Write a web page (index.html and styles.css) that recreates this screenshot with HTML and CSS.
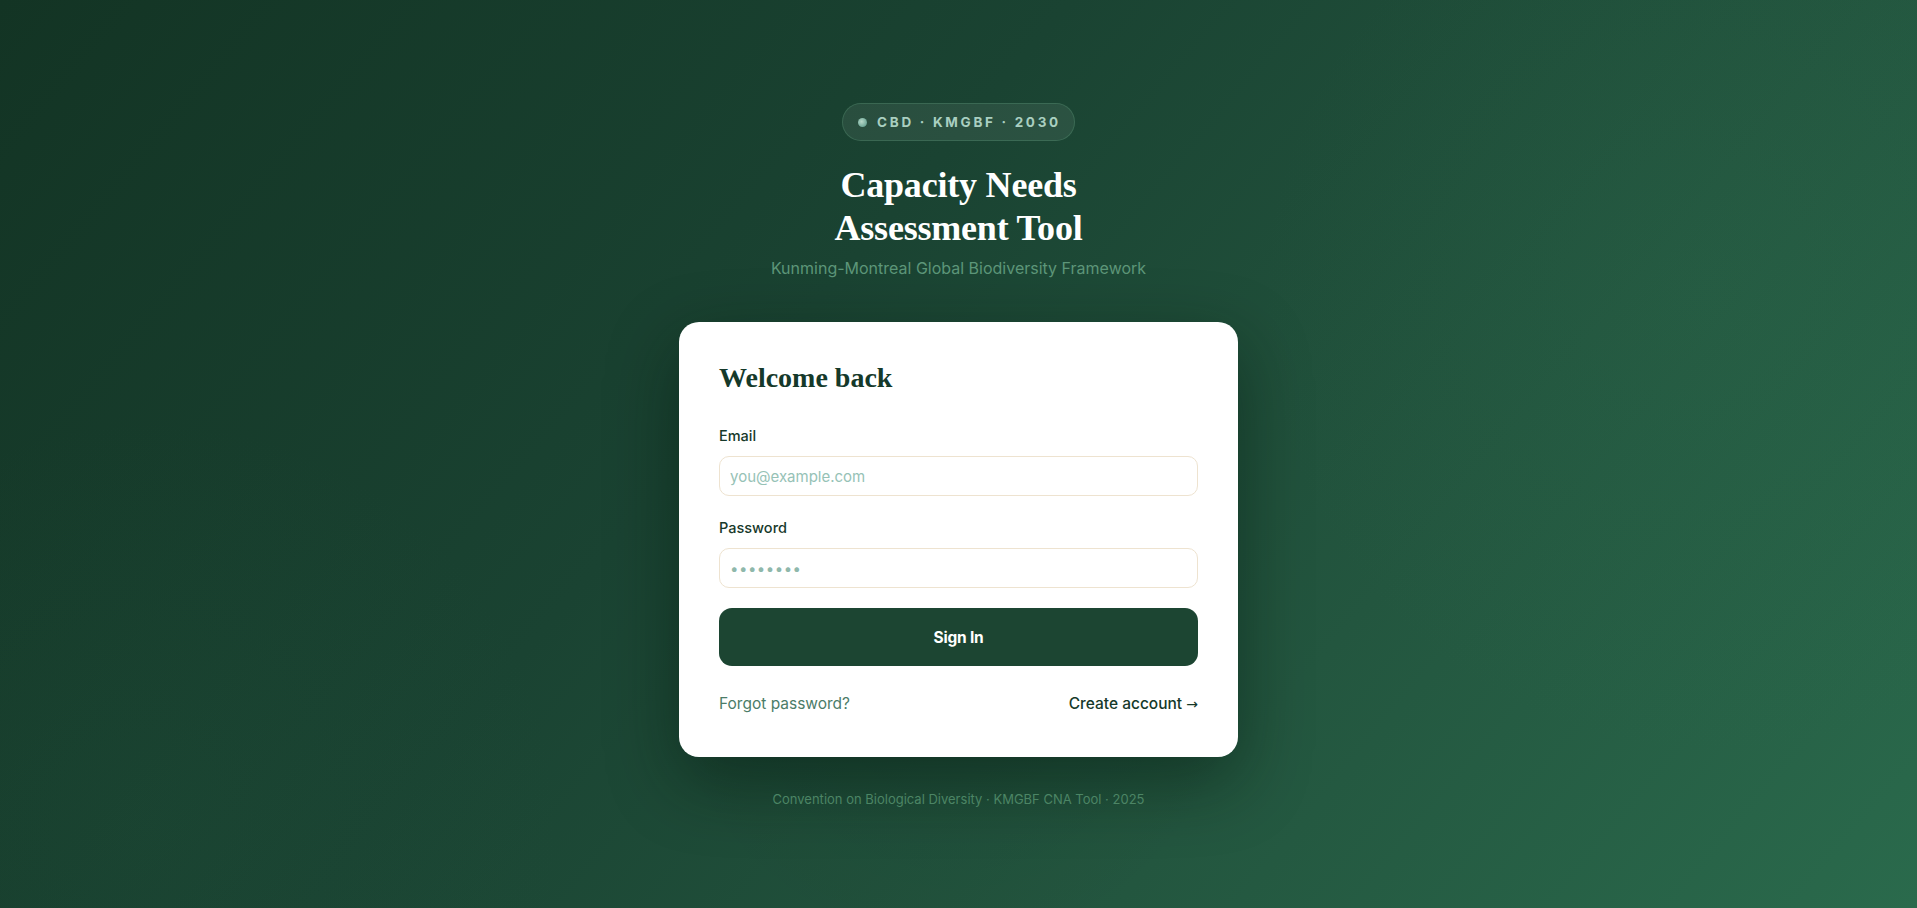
FILE: index.html
```html
<!DOCTYPE html>
<html lang="en">
<head>
<meta charset="utf-8">
<title>Capacity Needs Assessment Tool</title>
<link rel="stylesheet" href="styles.css">
</head>
<body>
<div class="bg-shapes">
  <span class="blob blob-a"></span>
  <span class="blob blob-b"></span>
  <span class="blob blob-c"></span>
</div>
<main class="page">
  <div class="badge"><span class="badge-dot"></span><span class="badge-text">CBD · KMGBF · 2030</span></div>
  <h1 class="title">Capacity Needs<br>Assessment Tool</h1>
  <p class="subtitle">Kunming-Montreal Global Biodiversity Framework</p>

  <section class="card">
    <h2 class="card-title">Welcome back</h2>
    <form class="form">
      <label class="field">
        <span class="field-label">Email</span>
        <input class="input" type="email" placeholder="you@example.com">
      </label>
      <label class="field">
        <span class="field-label">Password</span>
        <input class="input input-pass" type="password" placeholder="••••••••">
      </label>
      <button class="btn" type="button">Sign In</button>
    </form>
    <div class="links">
      <a class="link-muted" href="#">Forgot password?</a>
      <a class="link-strong" href="#">Create account <span class="arrow">→</span></a>
    </div>
  </section>

  <p class="footer">Convention on Biological Diversity · KMGBF CNA Tool · 2025</p>
</main>
</body>
</html>
```
FILE: styles.css
```css
* { box-sizing: border-box; }
html, body { height: 100%; }
body {
  margin: 0;
  min-height: 100vh;
  overflow: hidden;
  font-family: "Inter", "Noto Sans", "Liberation Sans", sans-serif;
  background: linear-gradient(130deg, #133424 0%, #1a4332 40%, #23563f 70%, #2a6a4c 100%);
  position: relative;
}
.bg-shapes { position: absolute; inset: 0; pointer-events: none; overflow: hidden; }
.blob { position: absolute; border-radius: 50%; }
.blob-a { width: 900px; height: 900px; left: -300px; top: 380px; background: radial-gradient(circle, rgba(40,100,70,0.10), rgba(0,0,0,0) 65%); }
.blob-b { width: 1000px; height: 1000px; right: -300px; top: -200px; background: radial-gradient(circle, rgba(50,120,85,0.12), rgba(0,0,0,0) 65%); }
.blob-c { width: 700px; height: 700px; left: 600px; top: 300px; background: radial-gradient(circle, rgba(0,0,0,0.06), rgba(0,0,0,0) 65%); }

.page {
  position: relative;
  display: flex;
  flex-direction: column;
  align-items: center;
  padding-top: 103px;
}
.badge {
  display: flex;
  align-items: center;
  gap: 10px;
  height: 38px;
  padding: 0 15px 0 15px;
  border-radius: 19px;
  background: rgba(255,255,255,0.07);
  border: 1px solid rgba(120,190,150,0.22);
}
.badge-dot {
  width: 9px; height: 9px; border-radius: 50%;
  background: radial-gradient(circle at 40% 40%, #b8d8c8, #6fa898 70%);
}
.badge-text {
  color: #a9cfc0;
  font-size: 13.5px;
  font-weight: 700;
  letter-spacing: 0.2em;
  margin-right: -2px;
}
.title {
  margin: 23px 0 0;
  font-family: "Liberation Serif", "DejaVu Serif", serif;
  font-weight: 700;
  font-size: 36px;
  line-height: 43px;
  color: #ffffff;
  text-align: center;
  letter-spacing: -0.2px;
}
.subtitle {
  margin: 7px 0 0;
  font-size: 16px;
  line-height: 22px;
  color: #5d9679;
}
.card {
  margin-top: 43px;
  width: 559px;
  background: #ffffff;
  border-radius: 20px;
  padding: 38px 40px 42px;
  box-shadow: 0 24px 70px rgba(0,20,10,0.45);
}
.card-title {
  margin: 0;
  font-family: "Liberation Serif", "DejaVu Serif", serif;
  font-weight: 700;
  font-size: 28px;
  line-height: 36px;
  color: #15392a;
}
.form { display: flex; flex-direction: column; margin-top: 30px; }
.field { display: flex; flex-direction: column; margin-bottom: 21px; }
.field + .field { margin-bottom: 20px; }
.field-label {
  font-size: 14.5px;
  font-weight: 500;
  line-height: 20px;
  color: #17392b;
  margin-bottom: 10px;
}
.field + .field .field-label { margin-top: 1px; }
.input {
  height: 40px;
  width: 100%;
  border: 1px solid #eee3d0;
  border-radius: 10px;
  padding: 0 10px;
  font-family: inherit;
  font-size: 15px;
  color: #1b3a2d;
  background: #fff;
  outline: none;
}
.input::placeholder { color: #96c2b6; }
.input-pass::placeholder { color: #8fb8ab; letter-spacing: 0.5px; }
.btn {
  height: 58px;
  border: 0;
  border-radius: 13px;
  background: #1c4532;
  color: #ffffff;
  font-family: inherit;
  font-size: 15.5px;
  font-weight: 700;
  letter-spacing: -0.2px;
}
.links {
  display: flex;
  justify-content: space-between;
  align-items: center;
  margin-top: 27px;
  font-size: 15.5px;
  line-height: 22px;
}
.link-muted { color: #4b7c68; text-decoration: none; }
.link-strong { color: #15392a; text-decoration: none; font-weight: 500; }
.arrow { font-family: "DejaVu Sans", sans-serif; font-weight: 400; font-size: 14px; }
.footer {
  margin: 33px 0 0;
  font-size: 13px;
  line-height: 18px;
  color: #4c8565;
}
```
